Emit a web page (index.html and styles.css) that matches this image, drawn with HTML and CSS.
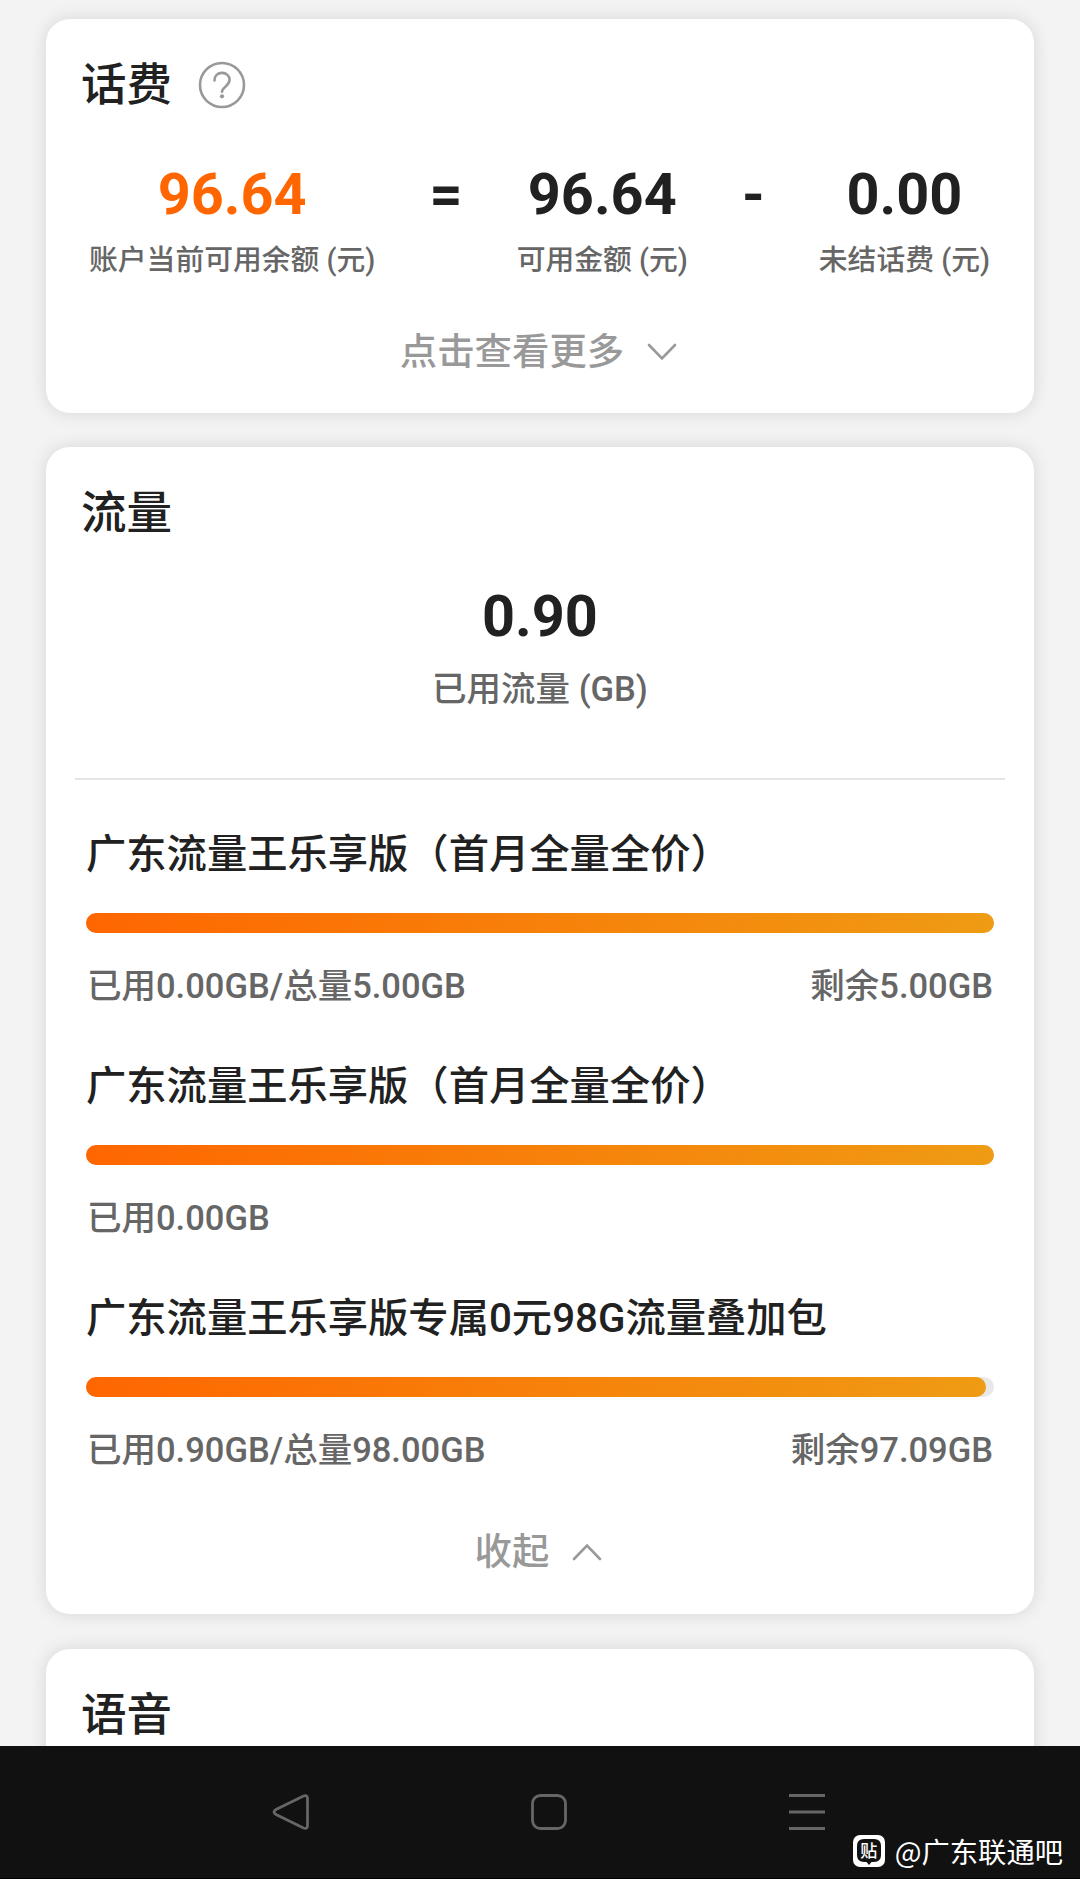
FILE: index.html
```html
<!DOCTYPE html>
<html lang="zh-CN">
  <head>
    <meta charset="UTF-8" />
    <title>话费流量查询</title>
    <link rel="stylesheet" href="styles.css">
  </head>
  <body>
    <main class="content">
      <section class="card fee-card">
        <h2 class="card-title">
          话费
          <svg class="help" viewBox="0 0 48 48">
            <circle cx="24" cy="24" r="22" />
            <path d="M16.500 19.500c0-4.600 3.200-7.600 7.500-7.600s7.600 2.900 7.600 6.900c0 3.100-1.700 4.700-3.900 6.600-2.400 2-3.700 3.300-3.700 5.400" />
            <circle class="dot" cx="24" cy="35.300" r="2.100" />
          </svg>
        </h2>
        <div class="fee-row">
          <div class="fee-item">
            <div class="num orange">96.64</div>
            <div class="label">账户当前可用余额 (元)</div>
          </div>
          <div class="num">=</div>
          <div class="fee-item">
            <div class="num">96.64</div>
            <div class="label">可用金额 (元)</div>
          </div>
          <div class="num">-</div>
          <div class="fee-item">
            <div class="num">0.00</div>
            <div class="label">未结话费 (元)</div>
          </div>
        </div>
        <div class="toggle">
          点击查看更多
          <svg class="arrow" viewBox="0 0 30 18"><path d="M2 2l13 13.500L28 2" /></svg>
        </div>
      </section>

      <section class="card data-card">
        <h2 class="card-title">流量</h2>
        <div class="used">
          <div class="num">0.90</div>
          <div class="used-label">已用流量 (GB)</div>
        </div>
        <ul class="plans">
          <li class="plan">
            <h3>广东流量王乐享版（首月全量全价）</h3>
            <div class="bar"><div class="bar-fill" style="width: 100%"></div></div>
            <div class="plan-info"><span>已用0.00GB/总量5.00GB</span><span>剩余5.00GB</span></div>
          </li>
          <li class="plan">
            <h3>广东流量王乐享版（首月全量全价）</h3>
            <div class="bar"><div class="bar-fill" style="width: 100%"></div></div>
            <div class="plan-info"><span>已用0.00GB</span></div>
          </li>
          <li class="plan">
            <h3>广东流量王乐享版专属0元98G流量叠加包</h3>
            <div class="bar"><div class="bar-fill" style="width: 99.08%"></div></div>
            <div class="plan-info"><span>已用0.90GB/总量98.00GB</span><span>剩余97.09GB</span></div>
          </li>
        </ul>
        <div class="toggle">
          收起
          <svg class="arrow" viewBox="0 0 30 18"><path d="M2 16L15 2.500 28 16" /></svg>
        </div>
      </section>

      <section class="card voice-card">
        <h2 class="card-title">语音</h2>
      </section>
    </main>

    <nav class="navbar">
      <svg class="nav-icon" viewBox="0 0 38 38"><path d="M31.500 3L4 16.500q-4 2.500 0 5L31.500 35q4 1.500 4-2.500v-27q0-4-4-2.500z" /></svg>
      <svg class="nav-icon" viewBox="0 0 38 38"><rect x="2.500" y="2.500" width="33" height="33" rx="8" /></svg>
      <svg class="nav-icon" viewBox="0 0 38 38"><path d="M1 2.500h36M1 19h36M1 35.500h36" /></svg>
    </nav>

    <div class="watermark">
      <div class="tieba">
        <svg viewBox="0 0 32 32">
          <rect width="32" height="32" rx="7" fill="#fff" />
          <path d="M11 4h10q7 0 7 7v9q0 7-7 7h-2.500L16 30l-2.500-3H11q-7 0-7-7v-9q0-7 7-7z" fill="#111" />
        </svg>
        <span>贴</span>
      </div>
      @广东联通吧
    </div>
  </body>
</html>
```

FILE: styles.css
```css
* {
  box-sizing: border-box;
}

body {
  margin: 0;
  height: 1879px;
  display: flex;
  flex-direction: column;
  position: relative;
  overflow: hidden;
  background: #f3f3f3;
  color: #212121;
  font-family: Roboto, "Noto Sans CJK SC", sans-serif;
  font-weight: 500;
}

h2,
h3,
ul {
  margin: 0;
  padding: 0;
  font-weight: 500;
  list-style: none;
}

.content {
  height: 1746px;
  padding: 19px 46px 0;
  overflow: hidden;
}

.card {
  background: #fff;
  border-radius: 24px;
  box-shadow: 0 0 18px rgba(0, 0, 0, 0.12);
  padding: 37px 29px 0;
}

.fee-card {
  height: 394px;
  margin-bottom: 34px;
}

.data-card {
  height: 1167px;
  margin-bottom: 35px;
}

.voice-card {
  height: 300px;
}

.card-title {
  display: flex;
  align-items: center;
  gap: 26px;
  height: 60px;
  padding-left: 6px;
  font-size: 45.5px;
  line-height: 60px;
}

.help {
  width: 48px;
  height: 48px;
  margin-top: -2px;
  fill: none;
  stroke: #999;
  stroke-width: 2.6;
  stroke-linecap: round;
}

.help .dot {
  fill: #999;
  stroke: none;
}

.fee-row {
  display: flex;
  justify-content: space-between;
  margin-top: 45px;
  padding: 0 15px 0 14px;
}

.fee-item {
  text-align: center;
}

.num {
  font-size: 57.6px;
  font-weight: 700;
  line-height: 68px;
}

.orange {
  color: #ff6600;
}

.label {
  margin-top: 11px;
  font-size: 28.8px;
  line-height: 40px;
  color: #666;
}

.toggle {
  display: flex;
  align-items: center;
  justify-content: center;
  gap: 23px;
  padding-right: 3px;
  font-size: 37.4px;
  line-height: 50px;
  color: #999;
}

.fee-card .toggle {
  margin-top: 47px;
}

.arrow {
  width: 30px;
  height: 18px;
  fill: none;
  stroke: #999;
  stroke-width: 2.6;
  stroke-linecap: round;
}

.used {
  height: 236px;
  padding-top: 39px;
  border-bottom: 2px solid #e5e5e5;
  text-align: center;
}

.used-label {
  margin-top: 14px;
  font-size: 34.5px;
  line-height: 48px;
  color: #666;
}

.plans {
  padding: 50px 11px 0;
}

.plan {
  height: 232px;
}

.plan h3 {
  font-size: 40.3px;
  line-height: 50px;
}

.bar {
  height: 20px;
  margin-top: 33px;
  border-radius: 10px;
  background: #e8e8e8;
}

.bar-fill {
  height: 100%;
  border-radius: 10px;
  background: linear-gradient(to right, #ff6600, #ef9b14);
}

.plan-info {
  display: flex;
  justify-content: space-between;
  margin-top: 28px;
  padding: 0 1px;
  font-size: 34.5px;
  line-height: 50px;
  color: #666;
}

.data-card .toggle {
  margin-top: 1px;
}

.navbar {
  display: flex;
  justify-content: center;
  gap: 220px;
  height: 133px;
  padding: 47px 0 0 18px;
  background: #111;
  border-bottom: 1px solid #000;
}

.nav-icon {
  width: 38px;
  height: 38px;
  fill: none;
  stroke: #666;
  stroke-width: 2.8;
}

.watermark {
  position: absolute;
  right: 17px;
  bottom: 8px;
  display: flex;
  align-items: center;
  gap: 10px;
  color: #fff;
  font-family: "Noto Sans CJK SC", sans-serif;
  font-size: 28.3px;
  font-weight: 400;
  line-height: 36px;
  padding-bottom: 2px;
}

.tieba {
  position: relative;
  width: 32px;
  height: 32px;
}

.tieba svg {
  display: block;
}

.tieba span {
  position: absolute;
  inset: 0;
  text-align: center;
  font-size: 17px;
  font-weight: 500;
  line-height: 30px;
}
```
